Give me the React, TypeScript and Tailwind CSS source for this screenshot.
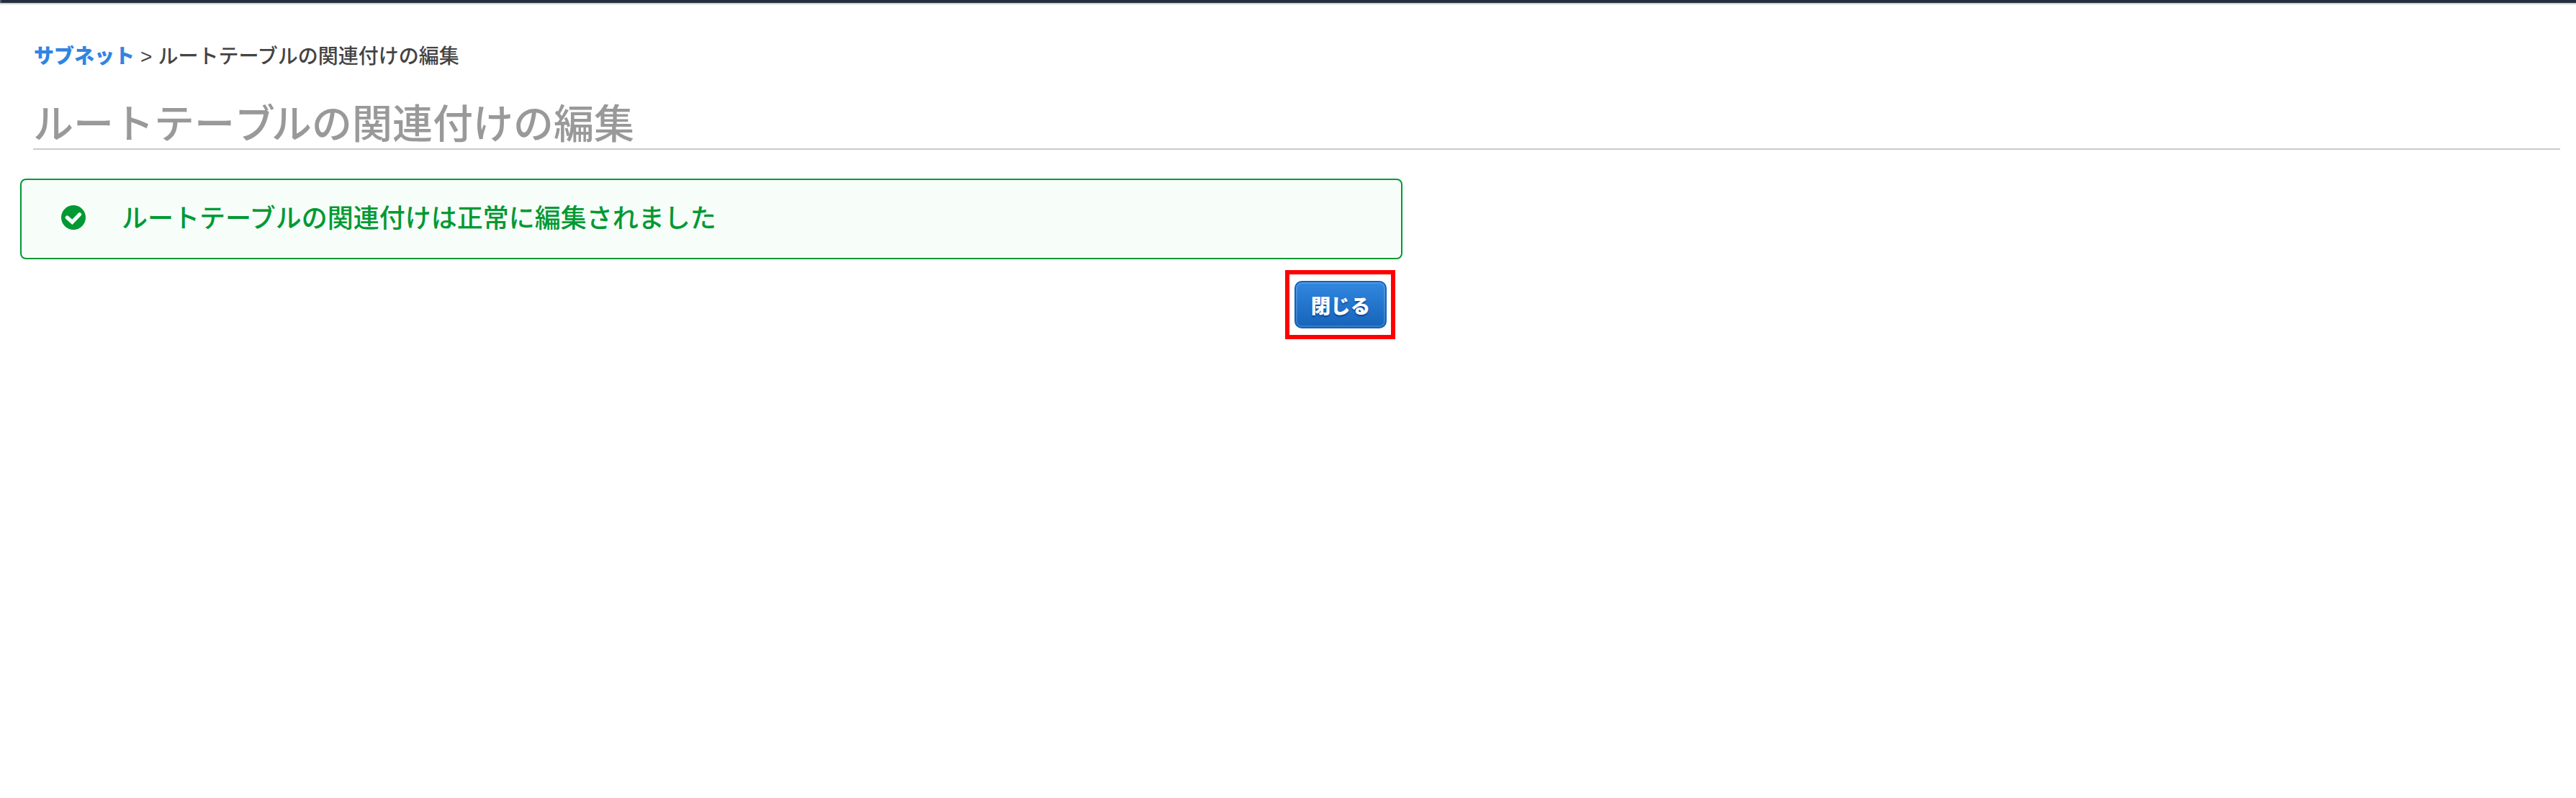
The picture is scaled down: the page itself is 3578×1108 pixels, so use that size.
export default function App() {
  return (
    <div className="h-[1108px] w-[3578px] overflow-hidden bg-white font-['Liberation_Sans','Noto_Sans_CJK_JP',sans-serif]">
      <header className="h-[6px] border-b-2 border-[#cccccc] bg-[#232f3f]">
        <div className="h-full w-[2px] bg-[#4c5667]" />
      </header>
      <div className="ml-[46px] mr-[22px] border-b-2 border-[#cccccc]">
        <nav className="flex h-[93px] items-end gap-[8px] whitespace-nowrap pl-[1px] text-[28px] leading-[40px] text-[#444444]">
          <a className="cursor-pointer font-black text-[#3184e2]">サブネット</a>
          <span>&gt;</span>
          <span className="font-medium">ルートテーブルの関連付けの編集</span>
        </nav>
        <h1 className="h-[107px] whitespace-nowrap pt-[34px] text-[56px] font-medium leading-[80px] text-[#999999]">
          ルートテー<span className="tracking-[-5px]">ブ</span>ルの関連付けの編集
        </h1>
      </div>
      <main className="ml-[28px] flex w-[1920px] flex-col items-end pt-[40px]">
        <section className="flex h-[112px] w-full items-start rounded-[8px] border-2 border-[#009933] bg-[#f7fdf9] pl-[55px] pt-[35px] text-[#009933]">
          <svg className="size-[34px] shrink-0" viewBox="0 0 34 34">
            <circle cx="17" cy="17" r="17" fill="currentColor" />
            <path d="M8.3 17l7 6.3L25.6 12.8" fill="none" stroke="#f7fdf9" strokeWidth="5.2" strokeLinecap="round" />
          </svg>
          <p className="ml-[50px] mt-[-6px] whitespace-nowrap text-[36px] font-medium leading-[50px]">
            ルートテーブルの関連付けは正常に編集されました
          </p>
        </section>
        <div className="mr-[10px] mt-[15px] flex h-[96px] w-[153px] border-6 border-[#ff0000] pl-[7px] pt-[9px]">
          <button className="h-[66px] w-[128px] whitespace-nowrap rounded-[10px] border-2 border-[#1463b8] bg-linear-to-b from-[#3287df] to-[#1464ba] pt-[5px] text-[27.5px] font-black text-white shadow-[inset_0_0_0_2px_rgba(255,255,255,0.15)] [text-shadow:0_2px_2px_rgba(0,0,80,0.4)]">
            閉じる
          </button>
        </div>
      </main>
    </div>
  );
}
